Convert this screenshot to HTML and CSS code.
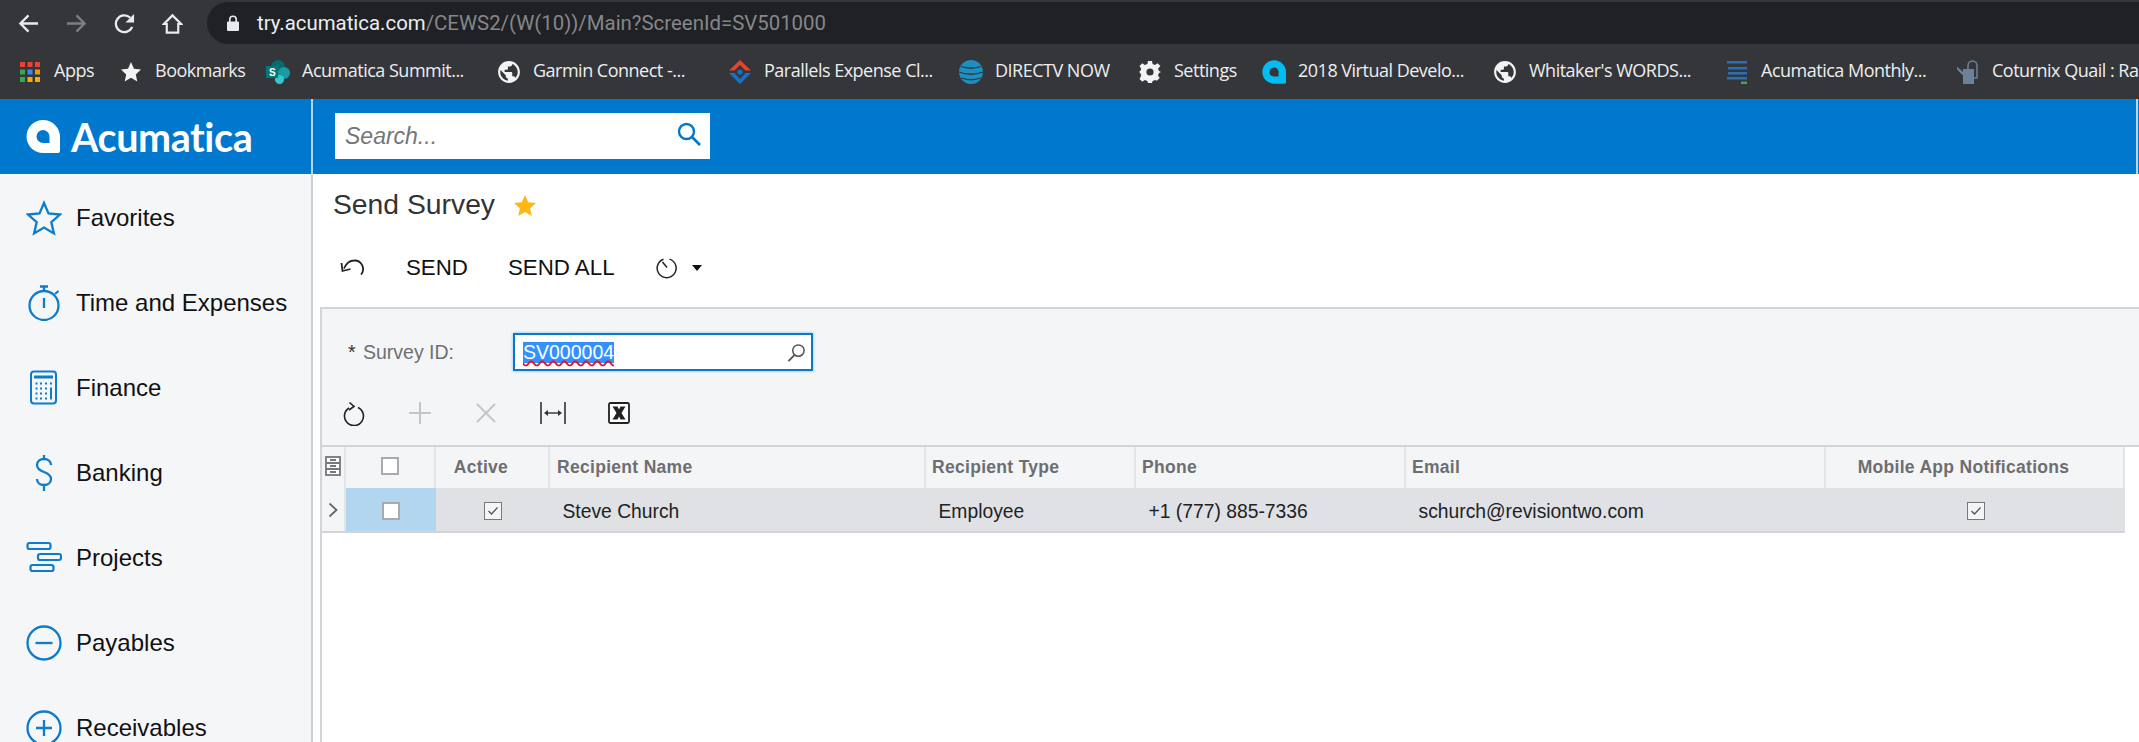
FILE: index.html
```html
<!DOCTYPE html>
<html lang="en">
<head>
<meta charset="utf-8">
<title>Send Survey</title>
<link rel="stylesheet" href="styles.css">
</head>
<body>
<div class="page">
  <div class="topbar">
    <div class="nav">
      <svg class="nav-icon" viewBox="0 0 22 22"><path d="M21 11H3M11 2.500 2.500 11l8.500 8.500" fill="none" stroke="#e8eaed" stroke-width="2.400"/></svg>
      <svg class="nav-icon" viewBox="0 0 22 22"><path d="M1 11H19M11 2.500 19.500 11 11 19.500" fill="none" stroke="#7d7f82" stroke-width="2.400"/></svg>
      <svg class="nav-icon" viewBox="0 0 22 22"><path d="M19 14.500A8.800 8.800 0 1 1 17 5" fill="none" stroke="#e8eaed" stroke-width="2.400"/><path d="M21 1v9h-9z" fill="#e8eaed"/></svg>
      <svg class="nav-icon" viewBox="0 0 22 22"><path d="M11 2.500 2 11.500H5V20.500h12v-9h3z" fill="none" stroke="#e8eaed" stroke-width="2.300"/></svg>
    </div>
    <div class="address">
      <svg class="lock" viewBox="0 0 14 17"><path d="M2 6.500h10a1 1 0 0 1 1 1V15a1 1 0 0 1-1 1H2a1 1 0 0 1-1-1V7.500a1 1 0 0 1 1-1z" fill="#e8eaed"/><path d="M3.800 7V4.500a3.200 3.200 0 0 1 6.400 0V7" fill="none" stroke="#e8eaed" stroke-width="1.600"/></svg>
      <span class="url"><span class="url-host">try.acumatica.com</span>/CEWS2/(W(10))/Main?ScreenId=SV501000</span>
    </div>
  </div>

  <div class="bookmarks">
    <div class="bm">
      <svg class="bm-icon" viewBox="0 0 22 24"><path d="M1 2h5v5H1zM8.500 2h5v5h-5zM16 2h5v5h-5z" fill="#ea4335"/><path d="M1 9.500h5v5H1z" fill="#34a853"/><path d="M8.500 9.500h5v5h-5z" fill="#4285f4"/><path d="M16 9.500h5v5h-5z" fill="#f29900"/><path d="M1 17h5v5H1z" fill="#34a853"/><path d="M8.500 17h5v5h-5zM16 17h5v5h-5z" fill="#f9ab00"/></svg>
      <span>Apps</span>
    </div>
    <div class="bm">
      <svg class="bm-icon" viewBox="0 0 22 24"><path d="m11 2 3 6.800 7 .8-5.200 4.800 1.500 7L11 17.800l-6.300 3.600 1.500-7L1 9.600l7-.8z" fill="#f1f3f4"/></svg>
      <span>Bookmarks</span>
    </div>
    <div class="bm">
      <svg class="bm-icon bm-wide" viewBox="0 0 24 24"><circle cx="12" cy="7" r="7" fill="#036c70"/><circle cx="18" cy="13" r="6" fill="#1a9ba1"/><circle cx="13.500" cy="19.500" r="4.500" fill="#37c6d0"/><path d="M0 6h12v12H0z" fill="#03787c"/><text class="sp-letter" x="6" y="15.500" text-anchor="middle">S</text></svg>
      <span>Acumatica Summit...</span>
    </div>
    <div class="bm">
      <svg class="bm-icon" viewBox="2 1 20 22"><path fill="#f1f3f4" d="M12 2C6.480 2 2 6.480 2 12s4.480 10 10 10 10-4.480 10-10S17.520 2 12 2zm-1 17.930c-3.950-.490-7-3.850-7-7.930 0-.620.080-1.210.210-1.790L9 15v1c0 1.100.900 2 2 2v1.930zm6.900-2.540c-.260-.810-1-1.390-1.900-1.390h-1v-3c0-.550-.450-1-1-1H8v-2h2c.550 0 1-.450 1-1V7h2c1.100 0 2-.900 2-2v-.410c2.930 1.190 5 4.060 5 7.410 0 2.080-.800 3.970-2.100 5.390z"/></svg>
      <span>Garmin Connect -...</span>
    </div>
    <div class="bm">
      <svg class="bm-icon" viewBox="0 0 22 24"><path d="M11 0 22 10.500h-5.500L11 5 5.500 10.500H0z" fill="#e8432a"/><path d="M0 13h5.500L11 19l5.500-6H22L11 24z" fill="#1670c4"/><circle cx="11" cy="12" r="2.600" fill="#1670c4"/></svg>
      <span>Parallels Expense Cl...</span>
    </div>
    <div class="bm">
      <svg class="bm-icon bm-globe" viewBox="0 0 24 24"><circle cx="12" cy="12" r="12" fill="#1d8fc4"/><path d="M2 6.500q10 3.500 20 0M0 12q12 4.500 24 0M2 18q10 3.500 20 0" fill="none" stroke="#35363a" stroke-width="1.300"/></svg>
      <span>DIRECTV NOW</span>
    </div>
    <div class="bm">
      <svg class="bm-icon" viewBox="0 -1 22 24"><path d="M9 0h4l.6 3 2.400 1 2.600-1.700 2.800 2.800L19 7.800 20 10l2 1-2 1-1 2.400 1.700 2.600-2.800 2.800L16.300 19l-2.700 1-.6 2H9l-.6-2-2.600-1-2.500 1.800-2.800-2.800L2.200 14.400 1.300 12 0 11l1.300-1 .9-2.200L.5 5.100l2.800-2.800L5.800 4l2.600-1z" fill="#f1f3f4"/><circle cx="11" cy="11" r="3.600" fill="#35363a"/></svg>
      <span>Settings</span>
    </div>
    <div class="bm">
      <svg class="bm-icon bm-wide" viewBox="0 0 34 33"><path fill-rule="evenodd" d="M17 0a17 17 0 0 1 17 17v14a2 2 0 0 1-2 2H17a16.500 16.500 0 0 1 0-33zm0 10a6.500 6.500 0 1 0 0 13h6.500v-6.500A6.500 6.500 0 0 0 17 10z" fill="#00bdf2"/></svg>
      <span>2018 Virtual Develo...</span>
    </div>
    <div class="bm">
      <svg class="bm-icon" viewBox="2 1 20 22"><path fill="#f1f3f4" d="M12 2C6.480 2 2 6.480 2 12s4.480 10 10 10 10-4.480 10-10S17.520 2 12 2zm-1 17.930c-3.950-.490-7-3.850-7-7.930 0-.620.080-1.210.210-1.790L9 15v1c0 1.100.900 2 2 2v1.930zm6.900-2.540c-.260-.810-1-1.390-1.900-1.390h-1v-3c0-.550-.450-1-1-1H8v-2h2c.550 0 1-.450 1-1V7h2c1.100 0 2-.900 2-2v-.410c2.930 1.190 5 4.060 5 7.410 0 2.080-.800 3.970-2.100 5.390z"/></svg>
      <span>Whitaker's WORDS...</span>
    </div>
    <div class="bm">
      <svg class="bm-icon" viewBox="0 0 22 24"><path d="M1 1h20v2.500H1zM2 7h19v2.500H2zM2 12h19v2.500H2zM1 17h20v2.500H1z" fill="#2a6fb5"/><path d="M15 21.500h6V24h-6z" fill="#3aa655"/></svg>
      <span>Acumatica Monthly...</span>
    </div>
    <div class="bm">
      <svg class="bm-icon" viewBox="0 0 22 24"><path d="M6 9h11v15H6zM6 12 0 6.500v3l6 6z" fill="#6e8198"/><path d="M11 9V5.500a4.500 4.500 0 0 1 9 0V18h-3" fill="none" stroke="#6e8198" stroke-width="1.500"/></svg>
      <span>Coturnix Quail : Raising</span>
    </div>
  </div>

  <header class="app-header">
    <div class="brand">
      <svg class="brand-mark" viewBox="0 0 34 33"><path fill-rule="evenodd" d="M17 0a17 17 0 0 1 17 17v14a2 2 0 0 1-2 2H17a16.500 16.500 0 0 1 0-33zm0 10a6.500 6.500 0 1 0 0 13h6.500v-6.500A6.500 6.500 0 0 0 17 10z" fill="#fff"/></svg>
      <span class="brand-name">Acumatica</span>
    </div>
    <div class="header-main">
      <div class="search">
        <span class="search-text">Search...</span>
        <svg class="search-icon" viewBox="0 0 24 24"><circle cx="9.500" cy="9.500" r="7.500" fill="none" stroke="#0077cc" stroke-width="2.400"/><path d="m15 15 8 8" stroke="#0077cc" stroke-width="2.600"/></svg>
      </div>
    </div>
  </header>

  <div class="workspace">
    <nav class="sidebar">
      <div class="side-item">
        <svg class="side-icon" viewBox="0 0 36 36"><path d="m18 3 4.500 10.500 11.500 1-8.700 7.600 2.600 11.300L18 27.500 8.100 33.400l2.600-11.300L2 14.500l11.500-1z" fill="none" stroke="#0d7ccc" stroke-width="2.300"/></svg>
        <span>Favorites</span>
      </div>
      <div class="side-item">
        <svg class="side-icon" viewBox="0 0 36 36"><circle cx="18" cy="20.500" r="14.500" fill="none" stroke="#0d7ccc" stroke-width="2.300"/><path d="M18 13v10M18 1.500V6M14 1.500h8M29 9l3.500-3" fill="none" stroke="#0d7ccc" stroke-width="2.300"/></svg>
        <span>Time and Expenses</span>
      </div>
      <div class="side-item">
        <svg class="side-icon" viewBox="0 0 36 36"><rect x="5" y="1.500" width="25" height="32" rx="3" fill="none" stroke="#0d7ccc" stroke-width="2"/><path d="M8 5.500h19v3H8z" fill="#0d7ccc"/><path d="M9.500 12.500h2v2h-2zM14 12.500h2v2h-2zM19 12.500h2v2h-2zM24 12.500h2v2h-2zM9.500 17.500h2v2h-2zM14 17.500h2v2h-2zM19 17.500h2v2h-2zM9.500 22.500h2v2h-2zM14 22.500h2v2h-2zM19 22.500h2v2h-2zM24 17.500h2v12h-2zM9.500 27.500h2v2h-2zM14 27.500h2v2h-2zM19 27.500h2v2h-2z" fill="#0d7ccc"/></svg>
        <span>Finance</span>
      </div>
      <div class="side-item">
        <svg class="side-icon" viewBox="0 0 36 36"><path d="M25 10c0-3.500-3-6-7-6s-7 2.500-7 6 3 5.500 7 7 7 3.500 7 7-3 6-7 6-7-2.500-7-6M18 0v4M18 30v6" fill="none" stroke="#0d7ccc" stroke-width="2.300"/></svg>
        <span>Banking</span>
      </div>
      <div class="side-item">
        <svg class="side-icon" viewBox="0 0 36 36"><rect x="1.500" y="3" width="23" height="6" rx="2" fill="none" stroke="#0d7ccc" stroke-width="2.200"/><rect x="12" y="14" width="23" height="6" rx="2" fill="none" stroke="#0d7ccc" stroke-width="2.200"/><rect x="4.500" y="25" width="23" height="6" rx="2" fill="none" stroke="#0d7ccc" stroke-width="2.200"/></svg>
        <span>Projects</span>
      </div>
      <div class="side-item">
        <svg class="side-icon" viewBox="0 0 36 36"><circle cx="18" cy="18" r="16.500" fill="none" stroke="#0d7ccc" stroke-width="2.300"/><path d="M9.500 18h17" stroke="#0d7ccc" stroke-width="2.300"/></svg>
        <span>Payables</span>
      </div>
      <div class="side-item">
        <svg class="side-icon" viewBox="0 0 36 36"><circle cx="18" cy="18" r="16.500" fill="none" stroke="#0d7ccc" stroke-width="2.300"/><path d="M10 18h16M18 10v16" stroke="#0d7ccc" stroke-width="2.300"/></svg>
        <span>Receivables</span>
      </div>
    </nav>

    <main class="main">
      <div class="title-row">
        <h1 class="title">Send Survey</h1>
        <svg class="title-star" viewBox="0 0 22 21"><path d="m11 0 3.200 7.200 7.800.8-5.900 5.200 1.700 7.800L11 17l-6.800 4 1.700-7.800L0 8l7.800-.8z" fill="#fdb913"/></svg>
      </div>
      <div class="actions">
        <svg class="act-undo" viewBox="0 0 24 18"><path d="M4 9.500c2-4.500 5-8 10-8a8.500 8.500 0 0 1 7 14" fill="none" stroke="#222" stroke-width="1.800"/><path d="M1.500 4 2.500 12l8-2" fill="none" stroke="#222" stroke-width="1.800"/></svg>
        <span class="act-send">SEND</span>
        <span class="act-sendall">SEND ALL</span>
        <svg class="act-clock" viewBox="0 0 22 22"><path d="M7.500 2.200a9.500 9.500 0 1 0 6 -.1" fill="none" stroke="#222" stroke-width="1.500"/><path d="M6.500 5 11 10.500" fill="none" stroke="#222" stroke-width="1.500"/></svg>
        <span class="act-caret"></span>
      </div>
      <section class="panel">
        <div class="form-row">
          <span class="req">*</span>
          <span class="label">Survey ID:</span>
          <div class="selector">
            <span class="selected">SV000004</span>
            <svg class="selector-icon" viewBox="0 0 20 20"><circle cx="12" cy="8" r="6" fill="none" stroke="#555" stroke-width="1.600"/><path d="M8 12.500 1.500 19" stroke="#555" stroke-width="2"/></svg>
          </div>
        </div>
        <div class="grid-tools">
          <svg class="tool tool-refresh" viewBox="0 0 22 24"><path d="M6 6.500a9.500 9.500 0 1 0 9-.5" fill="none" stroke="#222" stroke-width="1.600"/><path d="M6.500 1 11 5 6 8.500" fill="none" stroke="#222" stroke-width="1.600"/></svg>
          <svg class="tool tool-add" viewBox="0 0 22 22"><path d="M11 0v22M0 11h22" stroke="#c4c5c7" stroke-width="2"/></svg>
          <svg class="tool tool-del" viewBox="0 0 20 20"><path d="m1 1 18 18M19 1 1 19" stroke="#c4c5c7" stroke-width="2"/></svg>
          <svg class="tool tool-fit" viewBox="0 0 26 22"><path d="M1 0v22M25 0v22" stroke="#333" stroke-width="1.600"/><path d="M6 11h14" stroke="#333" stroke-width="1.400"/><path d="m4 11 4-3v6zM22 11l-4-3v6z" fill="#333"/></svg>
          <svg class="tool tool-excel" viewBox="0 0 22 22"><rect x="1" y="1" width="20" height="20" rx="1.500" fill="#fff" stroke="#222" stroke-width="1.800"/><path d="M4.500 4.500h5l1.500 3 1.500-3h5l-4 6.500 4 6.500h-5L11 14.500l-1.500 3h-5l4-6.500z" fill="#222"/></svg>
        </div>
        <div class="grid-table">
          <div class="row row-head">
            <div class="cell cell-icon cell-lift">
              <svg class="cols-icon" viewBox="0 0 16 20"><rect x="1" y="1" width="14" height="18" fill="#fff" stroke="#77787b" stroke-width="1.800"/><path d="M1 7h14M1 13h14M5 4h6M5 10h6M5 16h6" stroke="#77787b" stroke-width="1.800"/></svg>
            </div>
            <div class="cell cell-center cell-lift"><span class="box"></span></div>
            <div class="cell cell-center cell-off">Active</div>
            <div class="cell cell-name">Recipient Name</div>
            <div class="cell">Recipient Type</div>
            <div class="cell">Phone</div>
            <div class="cell">Email</div>
            <div class="cell cell-center cell-off">Mobile App Notifications</div>
          </div>
          <div class="row row-data">
            <div class="cell cell-icon cell-arrow">
              <svg class="chev" viewBox="0 0 10 16"><path d="m1.500 1.500 7 6.500-7 6.500" fill="none" stroke="#666" stroke-width="1.800"/></svg>
            </div>
            <div class="cell cell-center cell-sel"><span class="box"></span></div>
            <div class="cell cell-center"><span class="box box-on"><svg class="tick" viewBox="0 0 12 10"><path d="m1.500 5 3 3 6-6.500" fill="none" stroke="#555" stroke-width="1.300"/></svg></span></div>
            <div class="cell">Steve Church</div>
            <div class="cell">Employee</div>
            <div class="cell">+1 (777) 885-7336</div>
            <div class="cell">schurch@revisiontwo.com</div>
            <div class="cell cell-center"><span class="box box-on"><svg class="tick" viewBox="0 0 12 10"><path d="m1.500 5 3 3 6-6.500" fill="none" stroke="#555" stroke-width="1.300"/></svg></span></div>
          </div>
        </div>
      </section>
    </main>
  </div>
</div>
</body>
</html>
```
FILE: styles.css
```css
* { box-sizing: border-box; }
html, body { margin: 0; height: 100%; overflow: hidden; background: #fff; }
body { font-family: "Liberation Sans", Arial, sans-serif; color: #111; }
.page { width: 2139px; height: 742px; display: flex; flex-direction: column; overflow: hidden; }

.topbar { height: 44px; padding-top: 2px; background: #35363a; display: flex; }
.nav { width: 207px; padding: 11px 0 0 18px; display: flex; gap: 27px; flex: none; }
.nav-icon { width: 21px; height: 21px; }
.address { flex: 1; height: 42px; background: #202124; border-radius: 21px 0 0 21px; display: flex; align-items: center; padding-left: 19px; }
.lock { width: 14px; height: 17px; flex: none; }
.url { margin-left: 17px; font: 20.400px/1 Roboto, sans-serif; color: #85878a; white-space: nowrap; }
.url-host { color: #eceef0; }

.bookmarks { height: 55px; background: #35363a; display: grid; grid-template-columns: 101px 146px 232px 231px 229px 181px 123px 232px 232px 231px auto; padding-left: 19px; align-items: center; overflow: hidden; white-space: nowrap; }
.bm { display: flex; align-items: center; gap: 13px; font: 18px/1 "Open Sans", sans-serif; color: #eceef0; letter-spacing: -.5px; min-width: 0; }
.bm span { margin-bottom: 4px; }
.bm-icon { width: 22px; height: 24px; flex: none; }
.bm-wide { width: 24px; margin-right: -1px; }
.bm-globe { width: 26px; margin-right: -2px; }
.sp-letter { font: 700 10px "Liberation Sans", sans-serif; fill: #fff; }

.app-header { height: 75px; background: #0078ce; display: flex; flex: none; }
.brand { width: 311px; display: flex; align-items: center; padding-left: 26px; gap: 11px; flex: none; }
.brand-mark { width: 34px; height: 33px; }
.brand-name { font: 700 39.500px/1 Lato, sans-serif; color: #fff; letter-spacing: -.4px; }
.header-main { flex: 1; border-left: 2px solid #b5d6ef; border-right: 2px solid #b5d6ef; margin-right: 1px; display: flex; align-items: flex-start; padding: 14px 0 0 22px; }
.search { width: 375px; height: 46px; background: #fff; display: flex; align-items: center; justify-content: space-between; padding: 0 9px 0 10px; }
.search-text { font: italic 23px/1 "Liberation Sans", sans-serif; color: #747578; }
.search-icon { width: 24px; height: 26px; margin-bottom: 5px; }

.workspace { flex: 1; display: flex; min-height: 0; }
.sidebar { width: 313px; flex: none; background: #f5f6f8; border-right: 2px solid #ccced2; padding-top: 1px; overflow: hidden; }
.side-item { height: 85.100px; display: flex; align-items: center; padding-left: 26px; gap: 14px; font-size: 24px; color: #111; white-space: nowrap; }
.side-icon { width: 36px; height: 36px; flex: none; }

.main { flex: 1; min-width: 0; display: flex; flex-direction: column; padding-left: 7px; }
.title-row { height: 62px; padding-left: 13px; display: flex; align-items: center; gap: 19px; }
.title { margin: 0 0 2px; font-size: 28.300px; font-weight: 400; color: #333; white-space: nowrap; }
.title-star { width: 22px; height: 21px; }
.actions { height: 71px; padding: 0 0 8px 20px; display: flex; align-items: center; font-size: 22.300px; color: #111; white-space: nowrap; }
.act-undo { width: 24px; height: 18px; }
.act-send { margin-left: 42px; }
.act-sendall { margin-left: 40px; }
.act-clock { width: 22px; height: 22px; margin-left: 41px; }
.act-caret { margin-left: 14px; border: 5.500px solid transparent; border-top: 6px solid #111; border-bottom: 0; }

.panel { flex: 1; background: #fff; border-left: 2px solid #d3d4d8; display: flex; flex-direction: column; }
.form-row { height: 88px; border-top: 2px solid #d3d4d8; background: #f4f5f7; padding-left: 26px; display: flex; align-items: center; font-size: 19.500px; }
.req { width: 15px; color: #333; }
.label { width: 150px; color: #6f7073; }
.selector { width: 300px; height: 38px; background: #fff; border: 2.500px solid #0a78cf; box-shadow: 0 0 3px #7cbdf0; display: flex; align-items: center; justify-content: space-between; padding: 0 5px 0 8px; }
.selected { background: #3390ff; color: #fff; text-decoration: underline wavy #f01020 1.500px; text-underline-offset: 1px; line-height: 21px; }
.selector-icon { width: 19px; height: 19px; }

.grid-tools { height: 50px; background: #f4f5f7; display: flex; align-items: center; padding: 0 0 14px 21px; }
.tool { flex: none; }
.tool-refresh { width: 22px; height: 25px; }
.tool-add { width: 22px; height: 22px; margin-left: 44px; }
.tool-del { width: 20px; height: 20px; margin-left: 45px; }
.tool-fit { width: 26px; height: 22px; margin-left: 44px; }
.tool-excel { width: 22px; height: 22px; margin-left: 42px; }

.grid-table { border-top: 2px solid #d3d4d8; }
.row { display: grid; grid-template-columns: 24px 90px 114px 376px 210px 270px 420px 299px; width: 1803px; }
.row-head { height: 41px; background: #f4f5f7; font-size: 17.500px; font-weight: 700; color: #6d6e71; letter-spacing: .3px; }
.row-head .cell { border-right: 2px solid #e3e4e8; }
.row-data { height: 45px; background: #dfe1e5; border-bottom: 2px solid #d3d4d8; font-size: 19.300px; color: #222; }
.row-data .cell { padding: 4px 0 0 12.500px; }
.cell { display: flex; align-items: center; padding-left: 6px; white-space: nowrap; }
.row-head .cell-name { padding-left: 7px; }
.row-data .cell-center, .cell-center { justify-content: center; padding: 0; }
.row-data .cell-center { padding-top: 2px; }
.row-head .cell-off { padding-right: 22px; }
.row-data .cell-icon, .cell-icon { justify-content: center; padding: 0; }
.row-head .cell-lift { padding-bottom: 4px; }
.cell-arrow { background: #f4f5f7; border-right: 2px solid #e3e4e8; }
.cell-sel { background: #b3d6f0; }
.cols-icon { width: 16px; height: 20px; }
.chev { width: 10px; height: 16px; }
.box { width: 18px; height: 18px; background: #fff; border: 2px solid #a9aaad; display: flex; align-items: center; justify-content: center; }
.box-on { border-color: #77787b; background: #f4f5f7; border-width: 1.500px; }
.tick { width: 12px; height: 10px; }
```
